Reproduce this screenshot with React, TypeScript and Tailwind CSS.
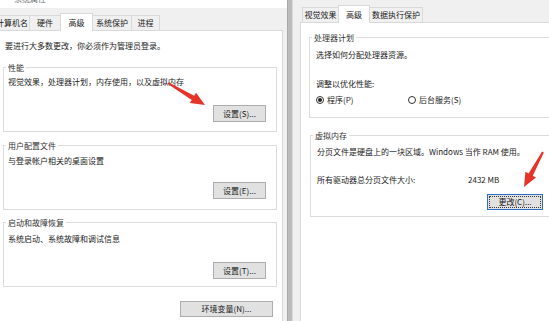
import type { ReactNode } from 'react'

type Pt = [number, number]

// red annotation arrow, tapering shaft + head
function arrowPoints(s: Pt, t: Pt, headLen = 14, headHalf = 6, w0 = 1, w1 = 2.4) {
  const dx = t[0] - s[0]
  const dy = t[1] - s[1]
  const len = Math.hypot(dx, dy)
  const ux = dx / len
  const uy = dy / len
  const nx = -uy
  const ny = ux
  const b: Pt = [t[0] - ux * headLen, t[1] - uy * headLen]
  const p = (base: Pt, w: number): string => `${base[0] + nx * w},${base[1] + ny * w}`
  return [p(s, w0), p(b, w1), p(b, headHalf), `${t[0]},${t[1]}`, p(b, -headHalf), p(b, -w1), p(s, -w0)].join(' ')
}

function Btn({ label, w, h = 17, focused = false }: { label: string; w: number; h?: number; focused?: boolean }) {
  return (
    <div
      className={`flex items-center justify-center bg-[#e1e1e1] border text-[8px] leading-none whitespace-nowrap ${
        focused ? 'border-[#2f6fc4] p-[1px]' : 'border-[#adadad]'
      }`}
      style={{ width: w, height: h }}
    >
      {focused ? (
        <span className="w-full h-full flex items-center justify-center border border-dotted border-[#3a3a3a]">{label}</span>
      ) : (
        label
      )}
    </div>
  )
}

function Group({ title, className, children }: { title: string; className: string; children: ReactNode }) {
  return (
    <fieldset className={`border border-[#dcdcdc] flex flex-col ${className}`}>
      <legend className="ml-[2px] px-[2px] text-[8px] leading-[11px] text-[#333]">{title}</legend>
      {children}
    </fieldset>
  )
}

function Tab({ label, w, active = false, first = false }: { label: string; w: number; active?: boolean; first?: boolean }) {
  return (
    <div
      className={`flex items-center justify-center text-[8px] leading-none whitespace-nowrap border-t border-r border-[#d9d9d9] ${
        active ? 'h-[18px] bg-white border-l -mb-px relative z-10 -ml-px' : 'h-[15px] bg-[#f0f0f0]'
      } ${first ? 'border-l' : ''}`}
      style={{ width: w }}
    >
      {label}
    </div>
  )
}

function Radio({ label, checked }: { label: string; checked?: boolean }) {
  return (
    <div className="flex items-center gap-[3px] text-[8px] leading-[11px]">
      <span className="w-[8px] h-[8px] rounded-full border border-[#333] bg-white flex items-center justify-center">
        {checked && <span className="w-[4px] h-[4px] rounded-full bg-[#222]" />}
      </span>
      <span>{label}</span>
    </div>
  )
}

export default function App() {
  return (
    <div className="relative w-[549px] h-[321px] overflow-hidden flex bg-white text-[#1b1b1b] [font-family:'Noto_Sans_CJK_SC','Microsoft_YaHei',sans-serif]">
      {/* 系统属性 - 高级 */}
      <div className="w-[287px] shrink-0 flex flex-col bg-[#f0f0f0]">
        <div className="h-[8px] bg-white overflow-hidden">
          <div className="-mt-[7px] ml-[14px] text-[8px] leading-[11px] text-[#666]">系统属性</div>
        </div>
        <div className="h-[22px] flex items-end -ml-[6px]">
          <Tab label="计算机名" w={36} first />
          <Tab label="硬件" w={31} />
          <Tab label="高级" w={33} active />
          <Tab label="系统保护" w={39} />
          <Tab label="进程" w={28} />
        </div>
        <div className="w-[283px] flex-1 bg-white border-t border-r border-[#d9d9d9] flex flex-col">
          <div className="pt-[9px] pl-[5px] text-[8px] leading-[11px]">要进行大多数更改，你必须作为管理员登录。</div>

          <Group title="性能" className="mt-[11px] ml-[3px] w-[274px] h-[70px]">
            <div className="mt-[3px] pl-[4px] text-[8px] leading-[11px]">视觉效果，处理器计划，内存使用，以及虚拟内存</div>
            <div className="mt-[18px] flex justify-end pr-[10px]">
              <Btn label="设置(S)..." w={53} />
            </div>
          </Group>

          <Group title="用户配置文件" className="mt-[8px] ml-[3px] w-[274px] h-[70px]">
            <div className="mt-[4px] pl-[4px] text-[8px] leading-[11px]">与登录帐户相关的桌面设置</div>
            <div className="mt-[16px] flex justify-end pr-[10px]">
              <Btn label="设置(E)..." w={53} />
            </div>
          </Group>

          <Group title="启动和故障恢复" className="mt-[7px] ml-[3px] w-[274px] h-[70px]">
            <div className="mt-[5px] pl-[4px] text-[8px] leading-[11px]">系统启动、系统故障和调试信息</div>
            <div className="mt-[18px] flex justify-end pr-[10px]">
              <Btn label="设置(T)..." w={53} />
            </div>
          </Group>

          <div className="mt-[14px] flex justify-end pr-[9px]">
            <Btn label="环境变量(N)..." w={93} h={16} />
          </div>
        </div>
      </div>

      {/* window edge */}
      <div className="w-[5px] shrink-0 bg-[#bcbcbc] border-l border-[#a8a8a8]" />

      {/* 性能选项 - 高级 */}
      <div className="w-[270px] shrink-0 flex flex-col bg-[#f0f0f0] border-l border-[#dadada] pl-[7px]">
        <div className="h-[22px] flex items-end ml-[2px]">
          <Tab label="视觉效果" w={37} first />
          <Tab label="高级" w={32} active />
          <Tab label="数据执行保护" w={53} />
        </div>
        <div className="flex-1 bg-white border-t border-l border-[#d9d9d9] flex flex-col">
          <Group title="处理器计划" className="mt-[9px] ml-[8px] w-[244px] h-[86px]">
            <div className="mt-[6px] pl-[6px] text-[8px] leading-[11px]">选择如何分配处理器资源。</div>
            <div className="mt-[18px] pl-[6px] text-[8px] leading-[11px]">调整以优化性能:</div>
            <div className="mt-[5px] pl-[6px] flex">
              <div className="w-[92px]">
                <Radio label="程序(P)" checked />
              </div>
              <Radio label="后台服务(S)" />
            </div>
          </Group>

          <Group title="虚拟内存" className="mt-[12px] ml-[9px] w-[244px] h-[87px]">
            <div className="mt-[5px] pl-[6px] text-[8px] leading-[11px] whitespace-nowrap">
              分页文件是硬盘上的一块区域。Windows 当作 RAM 使用。
            </div>
            <div className="mt-[17px] pl-[6px] flex text-[8px] leading-[11px]">
              <span className="w-[151px]">所有驱动器总分页文件大小:</span>
              <span>2432 MB</span>
            </div>
            <div className="mt-[9px] flex justify-end pr-[10px]">
              <Btn label="更改(C)..." w={56} h={16} focused />
            </div>
          </Group>
        </div>
      </div>

      {/* annotation arrows */}
      <svg className="absolute inset-0 pointer-events-none" width={549} height={321}>
        <polygon points={arrowPoints([168, 83], [205, 105])} fill="#e5342a" />
        <polygon points={arrowPoints([543, 152], [524, 187])} fill="#e5342a" />
      </svg>
    </div>
  )
}
